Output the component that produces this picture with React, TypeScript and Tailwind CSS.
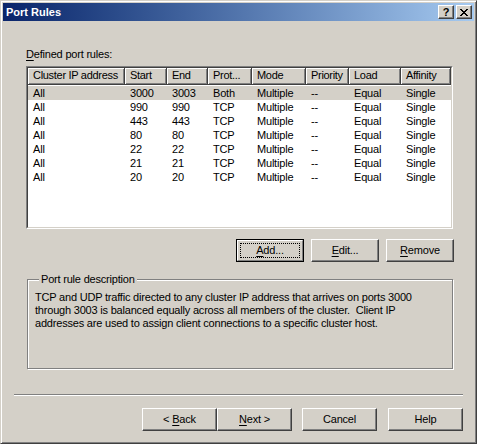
import React from "react";

const columns = [
  { label: "Cluster IP address", w: "w-[97px]" },
  { label: "Start", w: "w-[42px]" },
  { label: "End", w: "w-[41px]" },
  { label: "Prot...", w: "w-[44px]" },
  { label: "Mode", w: "w-[54px]" },
  { label: "Priority", w: "w-[43px]" },
  { label: "Load", w: "w-[52px]" },
  { label: "Affinity", w: "w-[50px]" },
];

const rows = [
  ["All", "3000", "3003", "Both", "Multiple", "--", "Equal", "Single"],
  ["All", "990", "990", "TCP", "Multiple", "--", "Equal", "Single"],
  ["All", "443", "443", "TCP", "Multiple", "--", "Equal", "Single"],
  ["All", "80", "80", "TCP", "Multiple", "--", "Equal", "Single"],
  ["All", "22", "22", "TCP", "Multiple", "--", "Equal", "Single"],
  ["All", "21", "21", "TCP", "Multiple", "--", "Equal", "Single"],
  ["All", "20", "20", "TCP", "Multiple", "--", "Equal", "Single"],
];

const raised =
  "border border-t-white border-l-white border-r-[#404040] border-b-[#404040] shadow-[inset_-1px_-1px_0_#808080]";

function Button({
  children,
  w = "w-[75px]",
  isDefault = false,
}: {
  children: React.ReactNode;
  w?: string;
  isDefault?: boolean;
}) {
  if (isDefault) {
    return (
      <div className={`${w} h-[23px] border border-black bg-[#d4d0c8]`}>
        <div className="h-full w-full border border-t-white border-l-white border-r-[#808080] border-b-[#808080] p-[2px]">
          <div className="flex h-full w-full items-center justify-center border border-dotted border-black">
            {children}
          </div>
        </div>
      </div>
    );
  }
  return (
    <div className={`${w} flex h-[23px] items-center justify-center bg-[#d4d0c8] ${raised}`}>
      {children}
    </div>
  );
}

function Mn({ c }: { c: string }) {
  return <span className="underline underline-offset-2">{c}</span>;
}

export default function App() {
  return (
    <div className="h-[444px] w-[477px] overflow-hidden bg-[#d4d0c8] font-['Liberation_Sans',Arial,sans-serif] text-[11px] leading-[13px] tracking-[-0.2px] text-black">
      {/* window frame */}
      <div className="flex h-full w-full flex-col border border-t-[#d4d0c8] border-l-[#d4d0c8] border-r-[#404040] border-b-[#404040] p-[2px] shadow-[inset_1px_1px_0_#fff,inset_-1px_-1px_0_#808080]">
        {/* Title bar */}
        <div className="flex h-[18px] shrink-0 items-center bg-linear-to-r from-[#0a246a] to-[#a6caf0] pl-[3px] pr-[2px]">
          <span className="flex-1 font-bold tracking-normal text-white">Port Rules</span>
          <div className={`mr-[2px] flex h-[14px] w-[16px] items-center justify-center bg-[#d4d0c8] ${raised}`}>
            <span className="text-[11px] font-bold leading-none">?</span>
          </div>
          <div className={`flex h-[14px] w-[16px] items-center justify-center bg-[#d4d0c8] ${raised}`}>
            <svg width="8" height="7" viewBox="0 0 8 7" shapeRendering="crispEdges">
              <path
                d="M0 0h2v1h1v1h2V1h1V0h2v1H7v1H6v1H5v1h1v1h1v1h1v1H6V6H5V5H3v1H2v1H0V6h1V5h1V4h1V3H2V2H1V1H0z"
                fill="#000"
              />
            </svg>
          </div>
        </div>

        {/* Body */}
        <div className="flex flex-col pl-[23px] pr-[21px] pt-[27px]">
          <div className="h-[13px]">
            <Mn c="D" />efined port rules:
          </div>

          {/* List view */}
          <div className="mt-[5px] h-[163px] border border-t-[#808080] border-l-[#808080] border-r-white border-b-white">
            <div className="h-full w-full border border-t-[#404040] border-l-[#404040] border-r-[#d4d0c8] border-b-[#d4d0c8] bg-white">
              <div className="flex">
                {columns.map((c) => (
                  <div
                    key={c.label}
                    className={`${c.w} h-[17px] shrink-0 whitespace-nowrap border-r border-b border-r-[#404040] border-b-[#404040] bg-[#d4d0c8] pl-[5px] leading-[15px] tracking-[-0.3px] shadow-[inset_1px_1px_0_#fff,inset_-1px_-1px_0_#808080]`}
                  >
                    {c.label}
                  </div>
                ))}
              </div>
              <div className="pt-px">
                {rows.map((r, i) => (
                  <div key={i} className={`flex h-[14px] items-center ${i === 0 ? "bg-[#d4d0c8]" : ""}`}>
                    {r.map((cell, j) => (
                      <div key={j} className={`${columns[j].w} shrink-0 whitespace-nowrap pl-[5px]`}>
                        {cell}
                      </div>
                    ))}
                  </div>
                ))}
              </div>
            </div>
          </div>

          {/* List buttons */}
          <div className="-mr-px mt-[10px] flex justify-end gap-[7px]">
            <Button w="w-[68px]" isDefault>
              <span>
                <Mn c="A" />dd...
              </span>
            </Button>
            <Button w="w-[68px]">
              <span>
                <Mn c="E" />dit...
              </span>
            </Button>
            <Button w="w-[68px]">
              <span>
                <Mn c="R" />emove
              </span>
            </Button>
          </div>

          {/* Group box */}
          <fieldset className="ml-px mt-[11px] h-[96px] border border-[#808080] pl-[7px] pr-[6px] pt-[5px] shadow-[1px_1px_0_#fff,inset_1px_1px_0_#fff]">
            <legend className="ml-[4px] bg-[#d4d0c8] px-[2px]">Port rule description</legend>
            <p className="w-[395px]">
              TCP and UDP traffic directed to any cluster IP address that arrives on ports 3000 through 3003 is balanced
              equally across all members of the cluster.&nbsp; Client IP addresses are used to assign client connections
              to a specific cluster host.
            </p>
          </fieldset>
        </div>

        {/* Separator */}
        <div className="mx-[11px] mt-[25px] h-[2px] border-t border-b border-t-[#808080] border-b-white" />

        {/* Bottom buttons */}
        <div className="mr-[11px] mt-[12px] flex justify-end">
          <Button>
            <span>
              &lt; <Mn c="B" />ack
            </span>
          </Button>
          <Button>
            <span>
              <Mn c="N" />ext &gt;
            </span>
          </Button>
          <div className="ml-[10px]">
            <Button>Cancel</Button>
          </div>
          <div className="ml-[11px]">
            <Button>Help</Button>
          </div>
        </div>
      </div>
    </div>
  );
}
